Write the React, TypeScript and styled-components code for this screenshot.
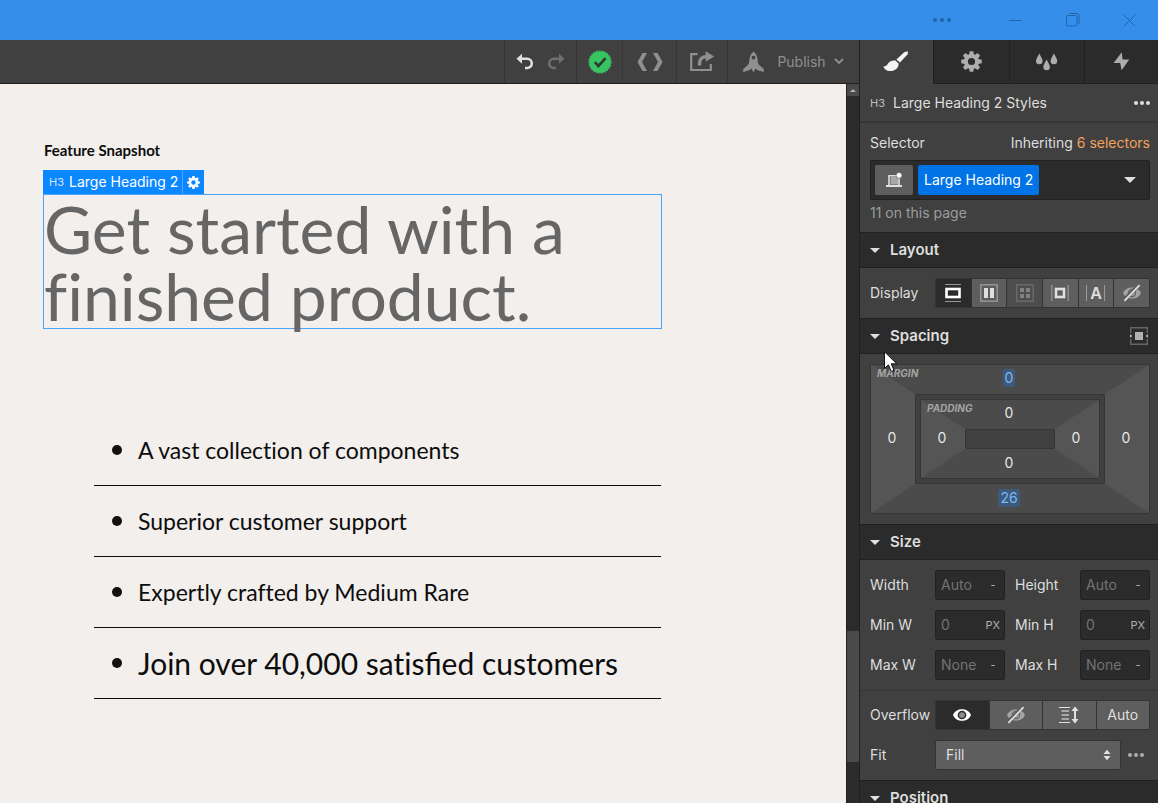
import React, { useId, useState } from "react";
import styled, { createGlobalStyle, css } from "styled-components";

const c = {
  title: "#368eeb",
  titleInk: "#1f64ad",
  bar: "#404040",
  dark: "#2b2b2b",
  edge: "#212121",
  line: "#363636",
  control: "#5e5e5e",
  text: "#dedede",
  muted: "#8f8f8f",
  accent: "#0073e6",
  link: "#f2a05a",
  page: "#f3efec",
};

const GlobalStyle = createGlobalStyle`
  *, *::before, *::after { box-sizing: border-box; }
  body { margin: 0; background: ${c.bar}; }
  h1, h2, h3, p, ul { margin: 0; padding: 0; }
  button, input, select { font: inherit; color: inherit; margin: 0; }
  button { border: 0; padding: 0; background: none; cursor: pointer; }
  svg { display: block; flex: none; }
`;

const Shell = styled.div`
  height: 100vh;
  display: flex;
  flex-direction: column;
  overflow: hidden;
  font-family: Inter, "Liberation Sans", sans-serif;
  font-size: 14px;
  line-height: 20px;
  color: ${c.text};
`;

/* ---------- window title bar ---------- */
const TitleBar = styled.header`
  flex: none;
  display: flex;
  align-items: center;
  justify-content: flex-end;
  height: 40px;
  background: ${c.title};
  color: ${c.titleInk};
`;

const WindowButton = styled.button<{ $wide?: boolean }>`
  width: ${(p) => (p.$wide ? 90 : 57)}px;
  height: 40px;
  display: grid;
  place-items: center;
`;

const Workspace = styled.div`
  flex: 1;
  min-height: 0;
  display: grid;
  grid-template-columns: minmax(0, 1fr) 299px;
`;

/* ---------- canvas side ---------- */
const Editor = styled.div`
  display: flex;
  flex-direction: column;
  min-height: 0;
`;

const Toolbar = styled.nav`
  flex: none;
  display: flex;
  justify-content: flex-end;
  height: 44px;
  background: ${c.bar};
  border-bottom: 1px solid ${c.edge};
  color: ${c.muted};
`;

const ToolGroup = styled.div<{ $width: number }>`
  width: ${(p) => p.$width}px;
  display: flex;
  align-items: center;
  justify-content: center;
  gap: 13px;
  border-left: 1px solid ${c.line};
`;

const ToolButton = styled.button`
  display: flex;
  align-items: center;
  gap: 13px;
  height: 32px;
`;

const PublishText = styled.span`
  display: flex;
  align-items: center;
  gap: 8px;
`;

const CanvasRow = styled.div`
  flex: 1;
  min-height: 0;
  display: grid;
  grid-template-columns: minmax(0, 1fr) 13px;
`;

const Page = styled.main`
  overflow: hidden;
  padding: 55px 43px 0 43px;
  background: ${c.page};
  color: #0d0d0d;
  font-family: Lato, "Liberation Sans", sans-serif;
`;

const Column = styled.div`
  max-width: 619px;
`;

const Eyebrow = styled.p`
  font-size: 15px;
  font-weight: 700;
  line-height: 22px;
  padding-left: 1px;
`;

const ElementTag = styled.div`
  display: flex;
  width: max-content;
  height: 24px;
  margin-top: 9px;
  background: #0b87ff;
  color: #fff;
  font-family: Inter, "Liberation Sans", sans-serif;
`;

const TagName = styled.span`
  display: flex;
  align-items: center;
  gap: 5px;
  padding: 0 4px 0 6px;
`;

const HeadingLevel = styled.small`
  font-size: 11px;
  opacity: 0.8;
`;

const TagSettings = styled.button`
  width: 22px;
  display: grid;
  place-items: center;
  border-left: 1px solid #4ba6ff;
`;

const Selected = styled.h1`
  height: 135px;
  border: 1px solid #4aa3f5;
  color: #666;
  font-size: 66px;
  font-weight: 400;
  line-height: 67px;
  font-variant-ligatures: none;
`;

const FeatureList = styled.ul`
  list-style: none;
  margin: 86px 1px 0 51px;
  font-variant-ligatures: none;
`;

const Ligature = styled.span`
  font-variant-ligatures: normal;
`;

const Feature = styled.li<{ $large?: boolean }>`
  display: flex;
  align-items: center;
  gap: 16px;
  height: 71px;
  padding-left: 18px;
  border-bottom: 1px solid #0d0d0d;
  font-size: ${(p) => (p.$large ? 30 : 23)}px;
  white-space: nowrap;

  &::before {
    content: "";
    width: 10px;
    height: 10px;
    border-radius: 50%;
    background: #111;
  }
`;

const Scroller = styled.div`
  display: grid;
  grid-template-rows: 12px 535fr 131fr 41fr;
  background: ${c.dark};
  border-left: 1px solid ${c.edge};
`;

const ScrollArrow = styled.button`
  display: grid;
  place-items: center;
  background: #4a4a4a;
  color: #b0b0b0;
`;

const ScrollThumb = styled.div`
  grid-row: 3;
  background: #4b4b4b;
`;

/* ---------- style panel ---------- */
const Panel = styled.aside`
  min-height: 0;
  overflow: hidden;
  background: ${c.bar};
  border-left: 1px solid ${c.edge};
`;

const Tabs = styled.div`
  display: grid;
  grid-template-columns: 73fr 76fr 75fr 74fr;
  height: 44px;
`;

const Tab = styled.button<{ $active?: boolean }>`
  display: grid;
  place-items: center;
  color: #adadad;
  background: ${c.dark};
  border-left: 1px solid ${c.edge};
  border-bottom: 1px solid ${c.edge};
  ${(p) =>
    p.$active &&
    css`
      padding-right: 3px;
      color: #f5f5f5;
      background: ${c.bar};
      border-color: ${c.bar};
    `}
`;

const PanelTitle = styled.div`
  display: flex;
  align-items: center;
  gap: 8px;
  height: 39px;
  padding: 0 8px 0 10px;
  border-bottom: 2px solid ${c.line};

  h2 {
    flex: 1;
    font-size: 14px;
    font-weight: 400;
  }
`;

const SelectorBox = styled.section`
  height: 109px;
  padding: 10px 8px 0 10px;
`;

const Between = styled.div`
  display: flex;
  justify-content: space-between;
`;

const SelectorLink = styled.a`
  color: ${c.link};
  text-decoration: none;
`;

const SelectorField = styled.div`
  display: flex;
  align-items: center;
  gap: 5px;
  height: 40px;
  margin: 7px 0 3px;
  padding: 0 13px 0 4px;
  background: ${c.dark};
  border: 1px solid ${c.edge};
  border-radius: 2px;
`;

const StateButton = styled.button`
  width: 38px;
  height: 30px;
  display: grid;
  place-items: center;
  background: ${c.control};
  border-radius: 2px;
`;

const ClassChip = styled.button`
  height: 30px;
  padding: 0 6px;
  margin-right: auto;
  background: ${c.accent};
  color: #fff;
  border-radius: 2px;
`;

const Usage = styled.p`
  color: #9c9c9c;
`;

const SectionBar = styled.div`
  position: relative;
  display: flex;
  align-items: center;
  justify-content: space-between;
  height: 36px;
  padding: 0 10px;
  background: ${c.dark};
  border: solid ${c.edge};
  border-width: 1px 0;
`;

const SectionToggle = styled.button`
  display: flex;
  align-items: center;
  gap: 10px;
  font-size: 15px;
  font-weight: 600;
`;

const Pointer = styled.svg`
  position: absolute;
  left: 24px;
  top: 32px;
  z-index: 2;
`;

const SectionBody = styled.div`
  padding: 10px 8px 10px 10px;
`;

const Field = styled.div`
  display: grid;
  grid-template-columns: 65px minmax(0, 1fr);
  align-items: center;
`;

const Segmented = styled.div`
  display: grid;
  grid-auto-flow: column;
  grid-auto-columns: 1fr;
  gap: 1px;
  height: 30px;
  padding: 1px;
  background: #333;
  border-radius: 2px;
`;

const Segment = styled.button<{ $dim?: boolean }>`
  display: grid;
  place-items: center;
  background: ${(p) => (p.$dim ? "#4d4d4d" : c.control)};

  &[aria-pressed="true"] {
    background: ${c.dark};
    color: #fff;
  }
`;

const LetterIcon = styled.span`
  width: 19px;
  height: 16px;
  border: solid #9a9a9a;
  border-width: 0 1px;
  font-weight: 600;
  font-size: 16px;
  line-height: 17px;
`;

/* margin and padding boxes */
const Frame = styled.div`
  position: relative;
  display: grid;
  grid-template-columns: 44px minmax(0, 1fr) 44px;
  grid-template-rows: 29px minmax(0, 1fr) 29px;
  background: #4b4b4b;
  border: 1px solid ${c.line};
  border-radius: 2px;
`;

const MarginFrame = styled(Frame)`
  height: 150px;
`;

const PaddingFrame = styled(Frame)`
  height: 80px;
`;

const Ring = styled.div`
  grid-area: 2 / 2;
  padding: 4px;
  background: ${c.bar};
  border: 1px solid ${c.line};
  border-radius: 2px;
`;

const Core = styled.div`
  grid-area: 2 / 2;
  background: ${c.bar};
  border: 1px solid ${c.line};
  border-radius: 2px;
`;

const FrameLabel = styled.span`
  position: absolute;
  left: 6px;
  top: 1px;
  font-size: 10px;
  line-height: 14px;
  font-weight: 700;
  font-style: italic;
  color: #a3a3a3;
`;

const areas = {
  top: "1 / 1 / 2 / 4",
  bottom: "3 / 1 / 4 / 4",
  left: "1 / 1 / 4 / 2",
  right: "1 / 3 / 4 / 4",
};
const clips = {
  top: "none",
  bottom: "none",
  left: "polygon(0 0, 100% 29px, 100% calc(100% - 29px), 0 100%)",
  right: "polygon(100% 0, 0 29px, 0 calc(100% - 29px), 100% 100%)",
};

const Side = styled.button<{ $side: keyof typeof areas }>`
  grid-area: ${(p) => areas[p.$side]};
  display: grid;
  place-items: center;
  padding: 0 2px ${(p) => (p.$side === "top" ? 4 : 2)}px 0;
  clip-path: ${(p) => clips[p.$side]};
  background: ${(p) => (p.$side === "left" || p.$side === "right" ? "#555" : "transparent")};
`;

const Amount = styled.span<{ $set?: boolean }>`
  padding: 0 2px;
  line-height: 18px;
  border-radius: 2px;
  color: ${(p) => (p.$set ? "#7ab8f5" : "#e6e6e6")};
  background: ${(p) => (p.$set ? "#3d5a7a" : "transparent")};
`;

const SizeGrid = styled.div`
  display: grid;
  grid-template-columns: repeat(2, minmax(0, 1fr));
  gap: 10px;
`;

const UnitField = styled.div`
  display: flex;
  align-items: center;
  height: 30px;
  padding: 0 4px 0 5px;
  background: ${c.dark};
  border: 1px solid ${c.edge};
  border-radius: 2px;

  input {
    flex: 1;
    width: 0;
    min-width: 0;
    padding: 0;
    border: 0;
    background: none;
  }
  input::placeholder {
    color: #737373;
    opacity: 1;
  }
  button {
    font-size: 11px;
    color: #b0b0b0;
    min-width: 14px;
  }
`;

const OverflowBody = styled(SectionBody)`
  display: grid;
  gap: 10px;
  padding-top: 9px;
  border-top: 1px solid ${c.line};
`;

const FitRow = styled.div`
  display: grid;
  grid-template-columns: minmax(0, 1fr) 29px;
  align-items: center;
`;

const SelectWrap = styled.div`
  display: grid;
  align-items: center;

  select {
    grid-area: 1 / 1;
    appearance: none;
    height: 30px;
    padding: 0 10px;
    color: ${c.text};
    background: ${c.control};
    border: 1px solid #333;
    border-radius: 2px;
  }
  svg {
    grid-area: 1 / 1;
    justify-self: end;
    margin-right: 10px;
    pointer-events: none;
  }
`;

const Centered = styled.button`
  display: grid;
  place-items: center;
  height: 30px;
  color: #adadad;
`;

/* ---------- icons ---------- */
const Dots = ({ r = 2, gap = 6 }: { r?: number; gap?: number }) => (
  <svg width={gap * 2 + r * 2} height={r * 2} fill="currentColor">
    {[0, 1, 2].map((i) => (
      <circle key={i} cx={r + i * gap} cy={r} r={r} />
    ))}
  </svg>
);

const Gear = ({ size }: { size: number }) => (
  <svg width={size} height={size} viewBox="-10.5 -10.5 21 21" fill="currentColor">
    <circle r="5.6" fill="none" stroke="currentColor" strokeWidth="4" />
    {[0, 45, 90, 135, 180, 225, 270, 315].map((a) => (
      <path key={a} d="M-2.5-6.5L-1.8-10.3H1.8L2.5-6.5Z" transform={`rotate(${a})`} />
    ))}
  </svg>
);

const Undo = ({ flip }: { flip?: boolean }) => (
  <svg width="18" height="17" viewBox="0 0 18 17" color={flip ? "#6e6e6e" : "#e0e0e0"}>
    <g transform={flip ? "translate(18 0) scale(-1 1)" : undefined}>
      <path d="M0.5 5.8L6 0.8V10.8Z" fill="currentColor" />
      <path d="M5 5.8H11.2A4.6 4.6 0 0 1 11.2 15H9" fill="none" stroke="currentColor" strokeWidth="2.5" />
    </g>
  </svg>
);

const Check = () => (
  <svg width="24" height="24" viewBox="0 0 24 24">
    <circle cx="12" cy="12" r="10.8" fill="#39c463" />
    <circle cx="12" cy="12" r="11" fill="none" stroke="#39c463" strokeWidth="1.2" strokeDasharray="1.7 1.1" />
    <path d="M6.8 12.2L10.4 16L17.6 8.2" fill="none" stroke="#2d3b30" strokeWidth="2.6" />
  </svg>
);

const Code = () => (
  <svg width="26" height="18" fill="currentColor">
    <path d="M0.5 9L5.5 0H10L5 9L10 18H5.5ZM25.5 9L20.5 0H16L21 9L16 18H20.5Z" />
  </svg>
);

const Share = () => (
  <svg width="25" height="21" fill="none" stroke="currentColor">
    <path d="M7.5 3.2H1.2V19H20.8V13" strokeWidth="2.2" />
    <path d="M9.5 14.5V12.5C9.5 8.2 12 5.6 16.5 5.6" strokeWidth="3.4" />
    <path d="M15.6 0.2L24.2 5.4L15.6 10.8Z" fill="currentColor" stroke="none" />
  </svg>
);

const Rocket = () => (
  <svg width="21" height="22" fill="currentColor" fillRule="evenodd">
    <path d="M10.5 0.5C13.5 3 14.8 6.4 14.8 11L15.6 13.4L20.8 18V21L14.6 19.2L12.6 17.6L10.5 21.5L8.4 17.6L6.4 19.2L0.2 21V18L5.4 13.4L6.2 11C6.2 6.4 7.5 3 10.5 0.5ZM10.5 4.7A1.9 1.9 0 1 0 10.5 8.5A1.9 1.9 0 1 0 10.5 4.7Z" />
  </svg>
);

const Chevron = () => (
  <svg width="10" height="7" fill="none" stroke="currentColor" strokeWidth="1.8">
    <path d="M1 1L5 5L9 1" />
  </svg>
);

const Triangle = ({ w = 10, up }: { w?: number; up?: boolean }) => (
  <svg width={w} height={w / 2} viewBox="0 0 10 5" fill="currentColor">
    <path d={up ? "M0 5L5 0L10 5Z" : "M0 0H10L5 5Z"} />
  </svg>
);

const Brush = () => (
  <svg width="26" height="21" fill="currentColor">
    <path d="M25 0.2L24.6 3.2L17 11.4L13.4 8.4L21.2 1.2Z" />
    <path d="M12.4 9.6L15.6 12.4C16 17 11.5 20.4 6.6 20C3.8 19.8 1.2 18 0.2 15.4C3 15.6 3.8 14.4 5 12.5C6.6 10.1 9.6 9 12.4 9.6Z" />
  </svg>
);

const Drops = () => (
  <svg width="22" height="18" fill="currentColor">
    {[
      [0, 0.5],
      [7.3, 6.5],
      [14.6, 0.5],
    ].map(([x, y]) => (
      <path
        key={x}
        transform={`translate(${x} ${y})`}
        d="M3.3 0C4.6 3 6.6 5 6.6 7.4A3.3 3.3 0 0 1 0 7.4C0 5 2 3 3.3 0Z"
      />
    ))}
  </svg>
);

const Bolt = () => (
  <svg width="17" height="19" fill="currentColor">
    <path d="M8.8 0.2L0.6 11H7.2L8.6 18.2L16.2 7.4H9.6Z" />
  </svg>
);

const Laptop = () => (
  <svg width="18" height="17" fill="none">
    <path d="M4 13V3.8H14V13" stroke="#e0e0e0" strokeWidth="1.6" />
    <rect x="5.5" y="5" width="7.5" height="7.5" fill="#a8a8a8" />
    <rect x="1" y="13" width="16" height="2" fill="#e0e0e0" />
    <circle cx="14" cy="3.4" r="3" fill="#fff" stroke="#5e5e5e" strokeWidth="0.8" />
  </svg>
);

const BlockIcon = () => (
  <svg width="16" height="18">
    <path d="M0 0.5H16M0 17.5H16" stroke="#999" strokeWidth="1" />
    <rect x="1.5" y="5" width="13" height="8" fill="none" stroke="#fff" strokeWidth="2.6" />
  </svg>
);

const FlexIcon = () => (
  <svg width="18" height="18">
    <rect x="0.8" y="0.8" width="16.4" height="16.4" fill="none" stroke="#999" strokeWidth="1.4" />
    <path d="M4 4H8V14H4ZM10 4H14V14H10Z" fill="#e0e0e0" />
  </svg>
);

const GridIcon = () => (
  <svg width="18" height="18">
    <rect x="0.8" y="0.8" width="16.4" height="16.4" fill="none" stroke="#6e6e6e" strokeWidth="1.3" />
    <path d="M4 4H8V8H4ZM10 4H14V8H10ZM4 10H8V14H4ZM10 10H14V14H10Z" fill="#828282" />
  </svg>
);

const InlineBlockIcon = () => (
  <svg width="18" height="16" fill="none">
    <path d="M0.8 0V16M17.2 0V16" stroke="#999" strokeWidth="1.2" />
    <rect x="5" y="4" width="8" height="8" stroke="#e0e0e0" strokeWidth="2.6" />
  </svg>
);

const HiddenIcon = () => (
  <svg width="20" height="18">
    <path d="M1 9C4 1.6 16 1.6 19 9C16 16.4 4 16.4 1 9Z" fill="#a3a3a3" />
    <circle cx="10" cy="9" r="3.6" fill="none" stroke="#5e5e5e" strokeWidth="1.2" />
    <path d="M1.6 16.6L17 0.8" stroke="#5e5e5e" strokeWidth="4" />
    <path d="M2.4 16.8L17.6 1.2" stroke="#e0e0e0" strokeWidth="1.8" />
  </svg>
);

const EyeIcon = () => (
  <svg width="18" height="14">
    <path d="M0 7C3-0.8 15-0.8 18 7C15 14.8 3 14.8 0 7Z" fill="#fff" />
    <circle cx="9" cy="7" r="3.6" fill="#8c8c8c" stroke="#2b2b2b" strokeWidth="1.5" />
  </svg>
);

const ScrollIcon = () => (
  <svg width="20" height="18" fill="#e0e0e0">
    <path d="M0 1.5H11M0 16.5H11" stroke="#e0e0e0" strokeWidth="1" />
    <path d="M2.5 5H10M2.5 9H10M2.5 13H10" stroke="#a8a8a8" strokeWidth="2" />
    <path d="M16 3V15" stroke="#e0e0e0" strokeWidth="2" />
    <path d="M12.4 5L16 0.5L19.6 5ZM12.4 13L16 17.5L19.6 13Z" />
  </svg>
);

const SpacingIcon = () => (
  <svg width="18" height="18">
    <path d="M0.7 6V0.7H17.3V6M0.7 12V17.3H17.3V12" fill="none" stroke="#666" strokeWidth="1.4" />
    <rect x="5" y="5" width="8" height="8" fill="#b0b0b0" />
    <path d="M0 7L2.4 9L0 11ZM18 7L15.6 9L18 11Z" fill="#b0b0b0" />
  </svg>
);

/* ---------- composed parts ---------- */
function SectionHead({ title, children }: { title: string; children?: React.ReactNode }) {
  return (
    <SectionBar>
      <SectionToggle aria-expanded="true">
        <Triangle />
        {title}
      </SectionToggle>
      {children}
    </SectionBar>
  );
}

function SizeField({ label, hint, unit }: { label: string; hint: string; unit: string }) {
  const id = useId();
  return (
    <Field>
      <label htmlFor={id}>{label}</label>
      <UnitField>
        <input id={id} placeholder={hint} />
        <button aria-label={`${label} unit`}>{unit}</button>
      </UnitField>
    </Field>
  );
}

function Sides({ kind, values, set = [] }: { kind: string; values: Record<string, number>; set?: string[] }) {
  return (
    <>
      {(Object.keys(areas) as (keyof typeof areas)[]).map((side) => (
        <Side key={side} $side={side} aria-label={`${kind} ${side}`}>
          <Amount $set={set.includes(side)}>{values[side]}</Amount>
        </Side>
      ))}
    </>
  );
}

const displayModes = [
  { name: "Block", icon: <BlockIcon /> },
  { name: "Flex", icon: <FlexIcon /> },
  { name: "Grid", icon: <GridIcon />, dim: true },
  { name: "Inline block", icon: <InlineBlockIcon /> },
  { name: "Inline", icon: <LetterIcon>A</LetterIcon> },
  { name: "None", icon: <HiddenIcon /> },
];

const overflowModes = [
  { name: "Visible", icon: <EyeIcon /> },
  { name: "Hidden", icon: <HiddenIcon /> },
  { name: "Scroll", icon: <ScrollIcon /> },
  { name: "Auto", icon: "Auto" },
];

const sizes = [
  ["Width", "Auto", "-"],
  ["Height", "Auto", "-"],
  ["Min W", "0", "PX"],
  ["Min H", "0", "PX"],
  ["Max W", "None", "-"],
  ["Max H", "None", "-"],
];

export default function App() {
  const [display, setDisplay] = useState("Block");
  const [overflow, setOverflow] = useState("Visible");

  return (
    <Shell>
      <GlobalStyle />
      <TitleBar>
        <WindowButton $wide aria-label="More">
          <Dots r={2} gap={7} />
        </WindowButton>
        <WindowButton aria-label="Minimize">
          <svg width="13" height="1">
            <rect width="13" height="1" fill="currentColor" />
          </svg>
        </WindowButton>
        <WindowButton aria-label="Restore">
          <svg width="14" height="14" fill="none" stroke="currentColor">
            <rect x="0.5" y="2.5" width="10.5" height="10.5" rx="1.5" />
            <path d="M3 0.5H11A2 2 0 0 1 13 2.5V11" />
          </svg>
        </WindowButton>
        <WindowButton aria-label="Close">
          <svg width="13" height="13" stroke="currentColor">
            <path d="M0.5 0.5L12.5 12.5M12.5 0.5L0.5 12.5" />
          </svg>
        </WindowButton>
      </TitleBar>

      <Workspace>
        <Editor>
          <Toolbar>
            <ToolGroup $width={72}>
              <ToolButton aria-label="Undo">
                <Undo />
              </ToolButton>
              <ToolButton aria-label="Redo">
                <Undo flip />
              </ToolButton>
            </ToolGroup>
            <ToolGroup $width={46}>
              <ToolButton aria-label="Saved">
                <Check />
              </ToolButton>
            </ToolGroup>
            <ToolGroup $width={54}>
              <ToolButton aria-label="Export code">
                <Code />
              </ToolButton>
            </ToolGroup>
            <ToolGroup $width={51}>
              <ToolButton aria-label="Share">
                <Share />
              </ToolButton>
            </ToolGroup>
            <ToolGroup $width={132}>
              <ToolButton>
                <Rocket />
                <PublishText>
                  Publish
                  <Chevron />
                </PublishText>
              </ToolButton>
            </ToolGroup>
          </Toolbar>

          <CanvasRow>
            <Page>
              <Column>
                <Eyebrow>Feature Snapshot</Eyebrow>
                <ElementTag>
                  <TagName>
                    <HeadingLevel>H3</HeadingLevel>
                    Large Heading 2
                  </TagName>
                  <TagSettings aria-label="Element settings">
                    <Gear size={13} />
                  </TagSettings>
                </ElementTag>
                <Selected>
                  Get started with a<br />
                  finished product.
                </Selected>
                <FeatureList>
                  <Feature>A vast collection of components</Feature>
                  <Feature>Superior customer support</Feature>
                  <Feature>Expertly crafted by Medium Rare</Feature>
                  <Feature $large>
                    <span>
                      Join over 40,000 satis<Ligature>fi</Ligature>ed customers
                    </span>
                  </Feature>
                </FeatureList>
              </Column>
            </Page>
            <Scroller>
              <ScrollArrow aria-label="Scroll up">
                <Triangle w={6} up />
              </ScrollArrow>
              <ScrollThumb />
            </Scroller>
          </CanvasRow>
        </Editor>

        <Panel>
          <Tabs>
            <Tab $active aria-label="Style">
              <Brush />
            </Tab>
            <Tab aria-label="Settings">
              <Gear size={21} />
            </Tab>
            <Tab aria-label="Style manager">
              <Drops />
            </Tab>
            <Tab aria-label="Interactions">
              <Bolt />
            </Tab>
          </Tabs>

          <PanelTitle>
            <HeadingLevel>H3</HeadingLevel>
            <h2>Large Heading 2 Styles</h2>
            <button aria-label="More style options">
              <Dots r={2} gap={6} />
            </button>
          </PanelTitle>

          <SelectorBox>
            <Between>
              <span>Selector</span>
              <span>
                Inheriting <SelectorLink href="#selectors">6 selectors</SelectorLink>
              </span>
            </Between>
            <SelectorField>
              <StateButton aria-label="Breakpoint">
                <Laptop />
              </StateButton>
              <ClassChip>Large Heading 2</ClassChip>
              <button aria-label="States">
                <Triangle w={12} />
              </button>
            </SelectorField>
            <Usage>11 on this page</Usage>
          </SelectorBox>

          <SectionHead title="Layout" />
          <SectionBody>
            <Field>
              <span id="display-label">Display</span>
              <Segmented role="group" aria-labelledby="display-label">
                {displayModes.map((m) => (
                  <Segment
                    key={m.name}
                    $dim={m.dim}
                    aria-label={m.name}
                    aria-pressed={display === m.name}
                    onClick={() => setDisplay(m.name)}
                  >
                    {m.icon}
                  </Segment>
                ))}
              </Segmented>
            </Field>
          </SectionBody>

          <SectionHead title="Spacing">
            <button aria-label="Center element">
              <SpacingIcon />
            </button>
            <Pointer width="16" height="22" viewBox="0 0 16 22">
              <path
                d="M0.5 0.8V17.5L4.4 13.8L7.3 20.5L10 19.3L7.2 12.8H12.8Z"
                fill="#fff"
                stroke="#111"
              />
            </Pointer>
          </SectionHead>
          <SectionBody>
            <MarginFrame>
              <Sides kind="Margin" values={{ top: 0, right: 0, bottom: 26, left: 0 }} set={["top", "bottom"]} />
              <Ring>
                <PaddingFrame>
                  <Sides kind="Padding" values={{ top: 0, right: 0, bottom: 0, left: 0 }} />
                  <Core />
                  <FrameLabel>PADDING</FrameLabel>
                </PaddingFrame>
              </Ring>
              <FrameLabel>MARGIN</FrameLabel>
            </MarginFrame>
          </SectionBody>

          <SectionHead title="Size" />
          <SectionBody>
            <SizeGrid>
              {sizes.map(([label, hint, unit]) => (
                <SizeField key={label} label={label} hint={hint} unit={unit} />
              ))}
            </SizeGrid>
          </SectionBody>
          <OverflowBody>
            <Field>
              <span id="overflow-label">Overflow</span>
              <Segmented role="group" aria-labelledby="overflow-label">
                {overflowModes.map((m) => (
                  <Segment
                    key={m.name}
                    aria-label={m.name}
                    aria-pressed={overflow === m.name}
                    onClick={() => setOverflow(m.name)}
                  >
                    {m.icon}
                  </Segment>
                ))}
              </Segmented>
            </Field>
            <Field>
              <label htmlFor="fit">Fit</label>
              <FitRow>
                <SelectWrap>
                  <select id="fit" defaultValue="Fill">
                    <option>Fill</option>
                    <option>Contain</option>
                    <option>Cover</option>
                    <option>None</option>
                  </select>
                  <svg width="8" height="12" fill="#e0e0e0">
                    <path d="M0.5 5L4 0.8L7.5 5ZM0.5 7L4 11.2L7.5 7Z" />
                  </svg>
                </SelectWrap>
                <Centered aria-label="More fit options">
                  <Dots r={2} gap={6} />
                </Centered>
              </FitRow>
            </Field>
          </OverflowBody>

          <SectionHead title="Position" />
        </Panel>
      </Workspace>
    </Shell>
  );
}
